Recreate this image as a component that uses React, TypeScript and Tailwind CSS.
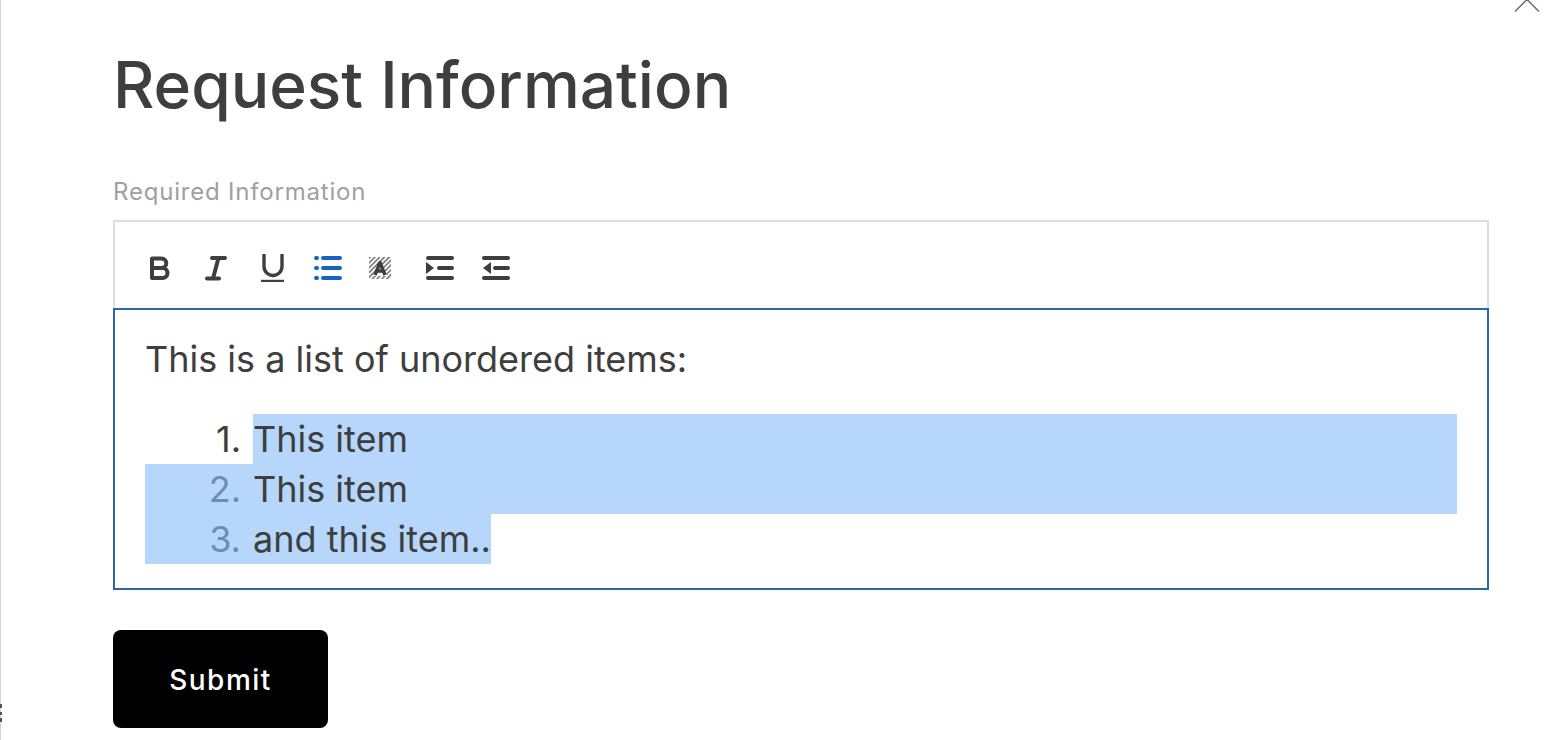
const ICON = '#3e3e3e';

function BoldIcon() {
  return (
    <svg width="22" height="26" viewBox="0 0 22 26" fill="none" stroke={ICON} strokeWidth="4" strokeLinejoin="round" strokeLinecap="round">
      <path d="M3 3.5h9.5a4.7 4.7 0 0 1 0 9.5H3zM3 13h10.5a5 5 0 0 1 0 10H3z" />
    </svg>
  );
}

function ItalicIcon() {
  return (
    <svg width="22" height="26" viewBox="0 0 22 26" fill="none" stroke={ICON} strokeWidth="4" strokeLinecap="round">
      <path d="M7 3h13M2 23.5h12M13.5 3 8 23.5" />
    </svg>
  );
}

function UnderlineIcon() {
  return (
    <svg width="24" height="28" viewBox="0 0 24 28" fill="none" stroke={ICON}>
      <path d="M3 1v11.5a9 9 0 0 0 18 0V1" strokeWidth="3.4" strokeLinecap="round" />
      <path d="M0 27h23" strokeWidth="2.4" />
    </svg>
  );
}

function ListIcon() {
  return (
    <svg width="28" height="24" viewBox="0 0 28 24" fill="none" stroke="#1565c0" strokeWidth="4" strokeLinecap="round">
      <path d="M2 2h1M2 12h1M2 22h1M9 2h17M9 12h17M9 22h17" />
    </svg>
  );
}

function HighlightIcon() {
  return (
    <svg width="22" height="22" viewBox="0 0 22 22">
      <defs>
        <pattern id="hatch" width="3.4" height="3.4" patternUnits="userSpaceOnUse" patternTransform="rotate(45)">
          <rect width="1.6" height="3.4" fill="#777" />
        </pattern>
      </defs>
      <rect width="22" height="22" fill="url(#hatch)" />
      <path d="M4 19 11 3l7 16z" fill="#fff" />
      <path d="M6 18 11 5.5l5 12.5M7.8 14h6.4" fill="none" stroke={ICON} strokeWidth="3.4" strokeLinejoin="round" />
    </svg>
  );
}

function IndentIcon() {
  return (
    <svg width="28" height="24" viewBox="0 0 28 24" fill="none" stroke={ICON} strokeWidth="4" strokeLinecap="round">
      <path d="M2 2h24M13 12h13M2 22h24" />
      <path d="M0 6v12l8-6z" fill={ICON} stroke="none" />
    </svg>
  );
}

function OutdentIcon() {
  return (
    <svg width="28" height="24" viewBox="0 0 28 24" fill="none" stroke={ICON} strokeWidth="4" strokeLinecap="round">
      <path d="M2 2h24M13 12h13M2 22h24" />
      <path d="M9 6v12l-8-6z" fill={ICON} stroke="none" />
    </svg>
  );
}

export default function App() {
  return (
    <div
      className="relative h-[740px] w-[1562px] overflow-hidden bg-white pl-[113px] text-[#3e3e3e]"
      style={{ fontFamily: 'Inter, "Liberation Sans", sans-serif' }}
    >
      {/* Left edge of the window behind the modal */}
      <div className="absolute bottom-0 left-0 top-0 w-px bg-[#d4d4d4]" />
      <div className="absolute left-0 top-[704px] h-[4px] w-[2px] bg-[#555]" />
      <div className="absolute left-0 top-[712px] h-[3px] w-[2px] bg-[#555]" />
      <div className="absolute left-0 top-[718px] h-[4px] w-[2px] bg-[#555]" />

      {/* Close button, cut off by the top of the page */}
      <svg className="absolute left-[1514px] top-0" width="26" height="13" viewBox="0 0 26 13" fill="none" stroke="#666" strokeWidth="1.4">
        <path d="M1 11.5 13 -0.5 25 11.5" />
      </svg>

      <h1 className="pt-[46px] text-[64px] font-medium leading-[78px]">Request Information</h1>

      <div className="mt-[54px] text-[24px] leading-[28px] tracking-[0.8px] text-[#a0a0a0]">Required Information</div>

      <div className="mt-[14px] w-[1376px]">
        {/* Toolbar */}
        <div className="flex h-[88px] items-center border-2 border-b-0 border-[#dddddd] pl-[34px] pt-[6px]">
          <div className="flex w-[56px]"><BoldIcon /></div>
          <div className="flex w-[56px]"><ItalicIcon /></div>
          <div className="flex w-[53px]"><UnderlineIcon /></div>
          <div className="flex w-[55px]"><ListIcon /></div>
          <div className="flex w-[57px]"><HighlightIcon /></div>
          <div className="flex w-[56px]"><IndentIcon /></div>
          <div className="flex w-[56px]"><OutdentIcon /></div>
        </div>

        {/* Editor */}
        <div className="h-[282px] border-2 border-[#2a66a8] pl-[30px] pr-[30px] pt-[24px] text-[36px] font-normal leading-[50px]">
          <p>This is a list of unordered items:</p>
          <div className="mt-[30px]">
            <div className="flex">
              <span className="w-[108px] pr-[12px] text-right">1.</span>
              <span className="flex-1 bg-[#b6d6fb]">This item</span>
            </div>
            <div className="flex bg-[#b6d6fb]">
              <span className="w-[108px] pr-[12px] text-right text-[#6b8eb9]">2.</span>
              <span>This item</span>
            </div>
            <div className="flex w-[346px] bg-[#b6d6fb]">
              <span className="w-[108px] pr-[12px] text-right text-[#6b8eb9]">3.</span>
              <span>and this item..</span>
            </div>
          </div>
        </div>

        <button className="mt-[40px] flex h-[98px] w-[215px] items-center justify-center rounded-[8px] bg-black pt-[2px] text-[28px] font-medium tracking-[1.5px] text-white">
          Submit
        </button>
      </div>
    </div>
  );
}
